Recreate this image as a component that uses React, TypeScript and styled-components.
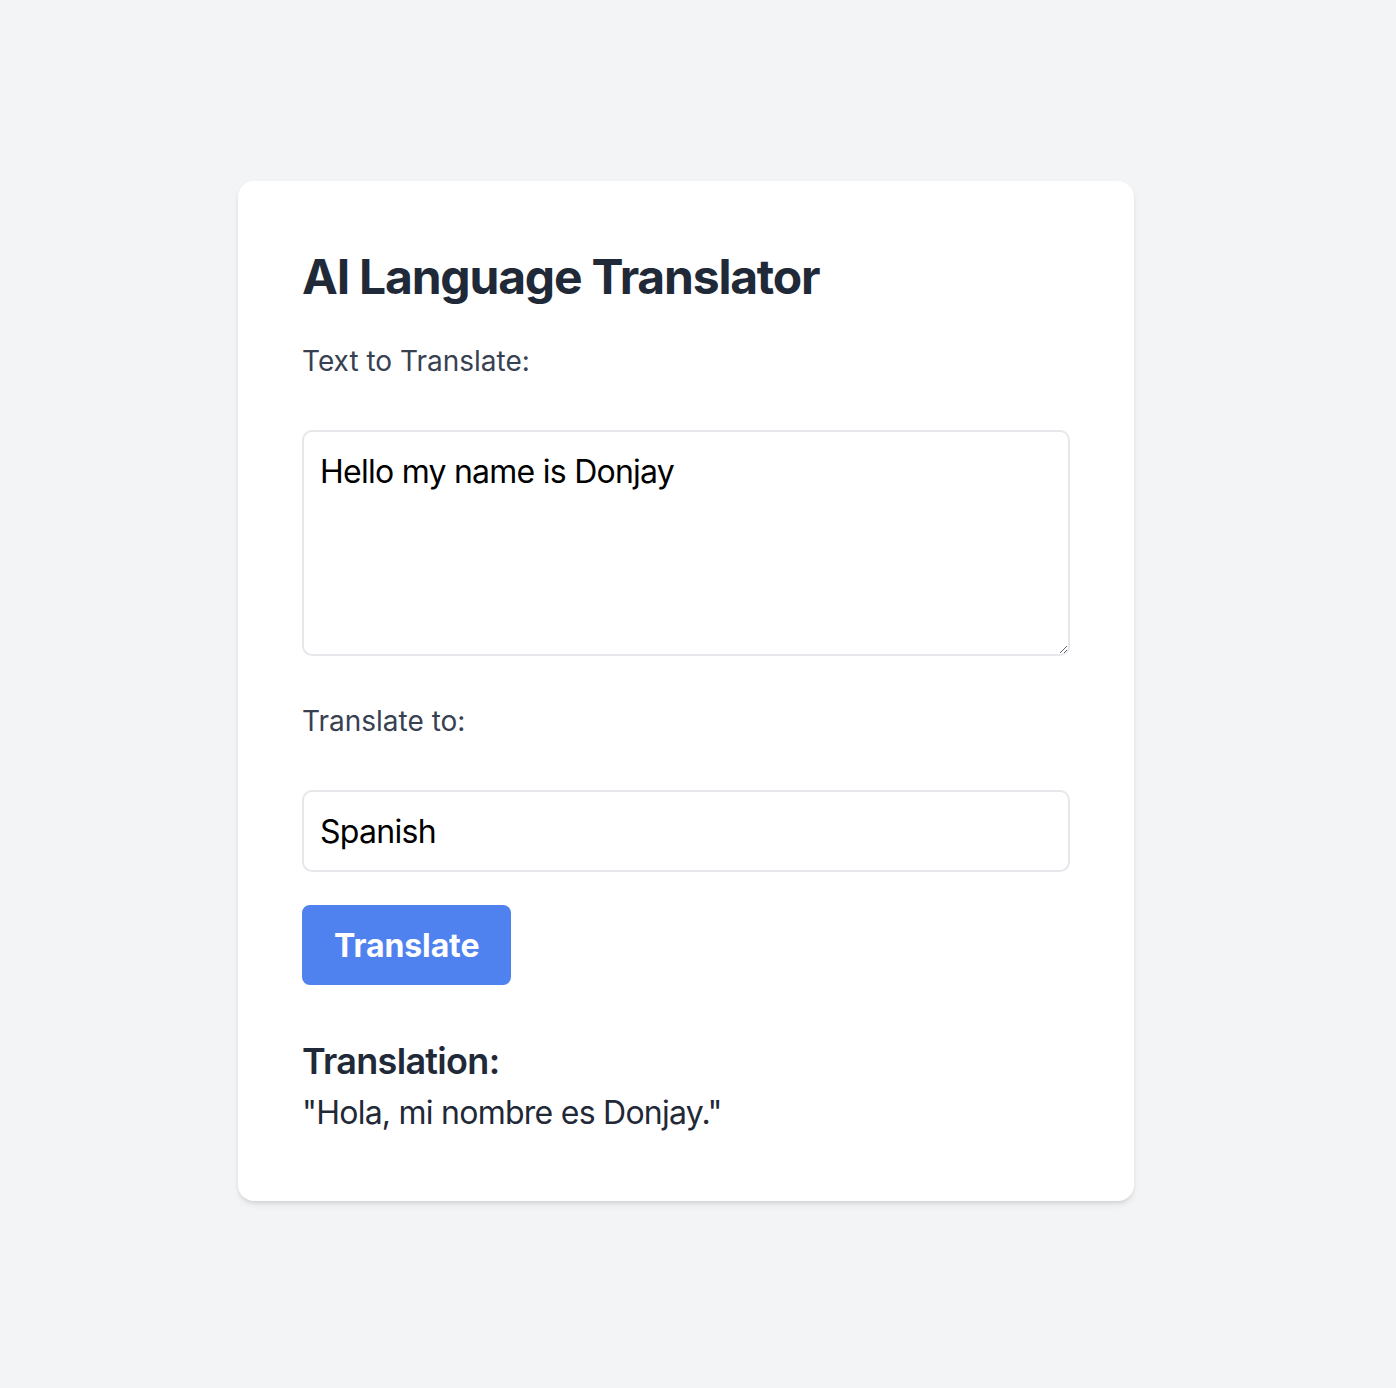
import React, { useState } from 'react';
import styled, { createGlobalStyle } from 'styled-components';

const GlobalStyle = createGlobalStyle`
  * {
    box-sizing: border-box;
  }
  body {
    margin: 0;
    background: #f3f4f6;
    font-family: Inter, "Noto Sans", sans-serif;
  }
`;

const Page = styled.div`
  min-height: 100vh;
  display: flex;
  justify-content: center;
  align-items: center;
  padding: 0 24px 6px 0;
`;

const Card = styled.div`
  width: 896px;
  background: #ffffff;
  border-radius: 16px;
  padding: 64px;
  box-shadow: 0 4px 6px -1px rgba(0, 0, 0, 0.1), 0 2px 4px -2px rgba(0, 0, 0, 0.1);
`;

const Title = styled.h1`
  margin: 0 0 32px;
  font-size: 48px;
  line-height: 64px;
  font-weight: 700;
  letter-spacing: -1.2px;
  color: #1f2937;
`;

const Label = styled.label`
  display: block;
  font-size: 28px;
  line-height: 40px;
  color: #374151;
  margin-bottom: 49px;
`;

const Field = styled.div<{ $gap: number }>`
  margin-bottom: ${(p) => p.$gap}px;
`;

const TextArea = styled.textarea`
  display: block;
  width: 100%;
  height: 226px;
  padding: 16px;
  border: 2px solid #e5e7eb;
  border-radius: 10px;
  font-family: Inter, "Noto Sans", sans-serif;
  font-size: 32px;
  line-height: 48px;
  letter-spacing: -0.75px;
  color: #000;
  outline: none;
`;

const Input = styled.input`
  display: block;
  width: 100%;
  height: 82px;
  padding: 0 16px;
  border: 2px solid #e5e7eb;
  border-radius: 10px;
  font-family: Inter, "Noto Sans", sans-serif;
  font-size: 32px;
  letter-spacing: -0.7px;
  color: #000;
  outline: none;
`;

const Button = styled.button`
  display: block;
  height: 80px;
  padding: 0 32px;
  border: none;
  border-radius: 8px;
  background: #4f82ef;
  color: #ffffff;
  font-family: Inter, "Noto Sans", sans-serif;
  font-size: 32px;
  font-weight: 700;
  letter-spacing: -0.1px;
  cursor: pointer;
`;

const Result = styled.div`
  margin-top: 48px;
`;

const ResultTitle = styled.h2`
  margin: 0;
  font-size: 36px;
  line-height: 56px;
  font-weight: 600;
  letter-spacing: -0.7px;
  color: #1f2937;
`;

const ResultText = styled.p`
  margin: 0;
  font-size: 32px;
  line-height: 48px;
  letter-spacing: -0.75px;
  color: #1f2937;
`;

export default function App() {
  const [text, setText] = useState('Hello my name is Donjay');
  const [lang, setLang] = useState('Spanish');

  return (
    <>
      <GlobalStyle />
      <Page>
        <Card>
          <Title>AI Language Translator</Title>
          <Field $gap={45}>
            <Label htmlFor="source">Text to Translate:</Label>
            <TextArea id="source" value={text} onChange={(e) => setText(e.target.value)} />
          </Field>
          <Field $gap={33}>
            <Label htmlFor="target">Translate to:</Label>
            <Input id="target" value={lang} onChange={(e) => setLang(e.target.value)} />
          </Field>
          <Button>Translate</Button>
          <Result>
            <ResultTitle>Translation:</ResultTitle>
            <ResultText>"Hola, mi nombre es Donjay."</ResultText>
          </Result>
        </Card>
      </Page>
    </>
  );
}
